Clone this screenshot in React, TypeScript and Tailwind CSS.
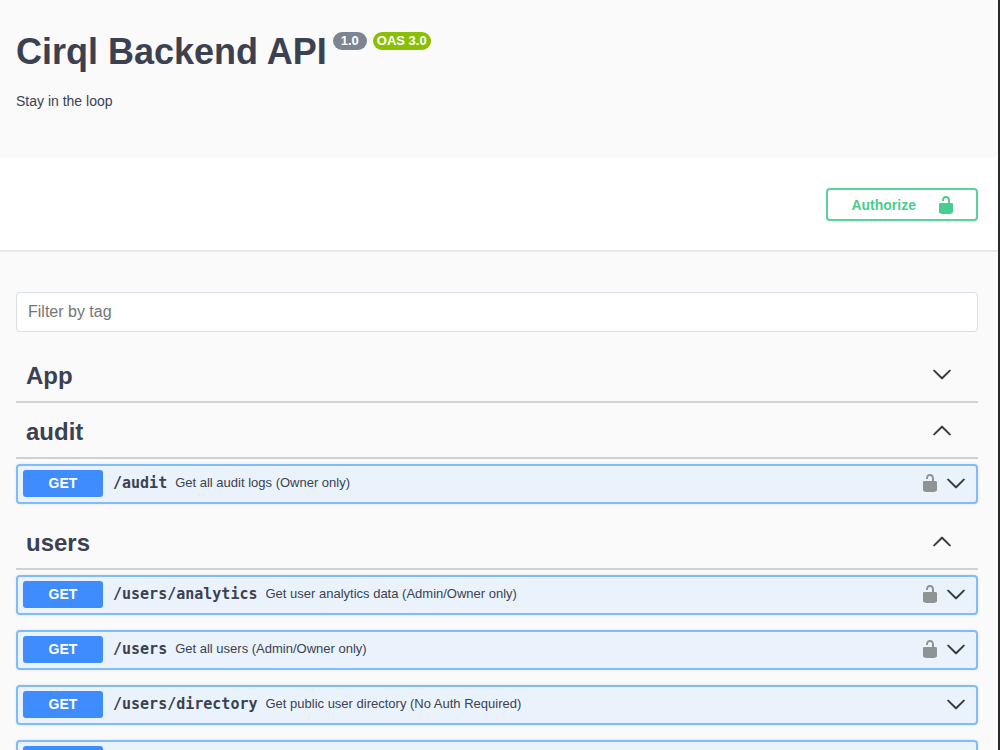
import React, { useState } from 'react';

type Operation = { path: string; summary: string; secured: boolean };
type Tag = { name: string; open: boolean; operations: Operation[] };

const TAGS: Tag[] = [
  { name: 'App', open: false, operations: [] },
  {
    name: 'audit',
    open: true,
    operations: [{ path: '/audit', summary: 'Get all audit logs (Owner only)', secured: true }],
  },
  {
    name: 'users',
    open: true,
    operations: [
      { path: '/users/analytics', summary: 'Get user analytics data (Admin/Owner only)', secured: true },
      { path: '/users', summary: 'Get all users (Admin/Owner only)', secured: true },
      { path: '/users/directory', summary: 'Get public user directory (No Auth Required)', secured: false },
      { path: '', summary: '', secured: true },
    ],
  },
];

const UnlockIcon: React.FC = () => (
  <svg className="h-5 w-5 shrink-0" viewBox="0 0 20 20" fill="currentColor" aria-hidden="true">
    <path d="M15.8 8H14V5.6C14 2.703 12.665 1 10 1 7.334 1 6 2.703 6 5.6V6h2v-.801C8 3.754 8.797 3 10 3c1.203 0 2 .754 2 2.199V8H4c-.553 0-1 .646-1 1.199V17c0 .549.428 1.139.951 1.307l1.197.387C5.672 18.861 6.55 19 7.1 19h5.8c.549 0 1.428-.139 1.951-.307l1.196-.387c.524-.167.953-.757.953-1.306V9.199C17 8.646 16.352 8 15.8 8z" />
  </svg>
);

const Chevron: React.FC<{ up?: boolean }> = ({ up }) => (
  <svg className="h-5 w-5 shrink-0 text-[#303030]" viewBox="0 0 20 20" fill="currentColor" stroke="currentColor" strokeWidth={0.5} aria-hidden="true">
    {up ? (
      <path d="M17.418 14.908c.272.268.709.268.979 0s.271-.701 0-.969l-7.908-7.83c-.27-.268-.707-.268-.979 0l-7.908 7.83c-.27.268-.27.701 0 .969.271.268.709.268.979 0L10 7.767z" />
    ) : (
      <path d="M17.418 6.109c.272-.268.709-.268.979 0s.271.701 0 .969l-7.908 7.83c-.27.268-.707.268-.979 0l-7.908-7.83c-.27-.268-.27-.701 0-.969.271-.268.709-.268.979 0L10 13.25z" />
    )}
  </svg>
);

const OperationRow: React.FC<{ op: Operation }> = ({ op }) => (
  <div className="flex h-10 items-center rounded border-2 border-[#7ebcfc] bg-[#eaf3fb] pr-[10px] pb-[2px] pl-[5px] shadow-[0_0_3px_rgba(0,0,0,0.1)]">
    <button type="button" className="flex min-w-0 flex-1 items-center text-left">
      <span className="w-20 shrink-0 rounded-[3px] bg-[#3f8cff] text-center text-sm leading-[27px] font-bold text-white">GET</span>
      <span className="ml-[10px] font-['DejaVu_Sans_Mono',monospace] text-[15px] font-bold">{op.path}</span>
      <span className="ml-2 truncate text-[13px]">{op.summary}</span>
    </button>
    {op.secured && (
      <button type="button" aria-label="authorization button unlocked" className="mr-[6px] text-[#8e9396]">
        <UnlockIcon />
      </button>
    )}
    <button type="button" aria-label="Expand operation">
      <Chevron />
    </button>
  </div>
);

const TagSection: React.FC<{ tag: Tag }> = ({ tag }) => {
  const [open, setOpen] = useState(tag.open);

  return (
    <section>
      <h3 className="border-b-2 border-[#d0d1d4]">
        <button
          type="button"
          aria-expanded={open}
          onClick={() => setOpen(!open)}
          className="flex h-[54px] w-full items-center justify-between pr-[26px] pl-[10px] text-2xl font-bold"
        >
          <span className="pt-1">{tag.name}</span>
          <Chevron up={open} />
        </button>
      </h3>
      {open && (
        <div className="flex flex-col gap-[15px] pt-[5px] pb-[10px]">
          {tag.operations.map((op) => (
            <OperationRow key={op.path} op={op} />
          ))}
        </div>
      )}
    </section>
  );
};

const App: React.FC = () => {
  const [filter, setFilter] = useState('');
  const tags = TAGS.filter((tag) => tag.name.toLowerCase().includes(filter.toLowerCase()));

  return (
    <div className="h-screen overflow-hidden border-r-2 border-[#2b2b2b] bg-[#fafafa] font-['Liberation_Sans',Arial,sans-serif] text-[#3b4151]">
      <header className="px-4 pt-7 pb-[47px]">
        <div className="flex items-start gap-[6px]">
          <h1 className="text-4xl leading-[47px] font-bold">Cirql Backend API</h1>
          <span className="mt-1 rounded-full bg-[#7d8492] px-2 text-[13px] leading-[18px] font-bold text-white">1.0</span>
          <span className="mt-1 rounded-full bg-[#89bf04] px-1 text-[13px] leading-[18px] font-bold text-white">OAS 3.0</span>
        </div>
        <p className="mt-4 text-sm">Stay in the loop</p>
      </header>

      <div className="flex justify-end border-b-2 border-[#e8e8e9] bg-white px-5 pt-[30px] pb-[29px]">
        <button
          type="button"
          className="flex h-[33px] items-center gap-5 rounded border-2 border-[#5bd19b] pr-5 pl-[23px] text-sm font-bold text-[#49cc90] shadow-[0_1px_2px_rgba(0,0,0,0.1)]"
        >
          Authorize
          <UnlockIcon />
        </button>
      </div>

      <main className="pt-10 pr-5 pl-4">
        <input
          type="text"
          aria-label="Filter by tag"
          placeholder="Filter by tag"
          value={filter}
          onChange={(e) => setFilter(e.target.value)}
          className="mb-[15px] block h-10 w-full rounded border border-[#d8dde7] bg-white px-[11px] text-base placeholder:text-[#757575]"
        />
        {tags.map((tag) => (
          <TagSection key={tag.name} tag={tag} />
        ))}
      </main>
    </div>
  );
};

export default App;
